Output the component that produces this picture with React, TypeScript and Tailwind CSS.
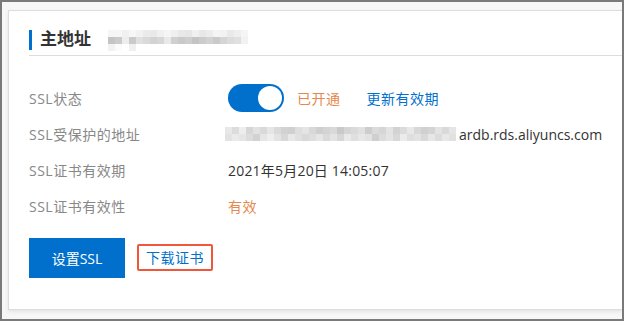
const FONT = '"Open Sans", "Noto Sans CJK SC", sans-serif';

// mosaic rows for the blurred text
const titleRows = [
  "fff,f6f6f6,f6f6f6,f0f0f0,f7f7f7,f2f2f2,ebebeb,e9e9e9,f0f0f0,f5f5f5,efefef,e8e8e8,e6e6e6,f0f0f0,e8e8e8,ececec,f4f4f4,f2f2f2,e9e9e9,eeeeee,f5f5f5",
  "fff,c4c4c4,cbcbcb,ededed,cacaca,e0e0e0,dadada,d3d3d3,d7d7d7,e9e9e9,d0d0d0,c9c9c9,cecece,c4c4c4,cccccc,d2d2d2,cacaca,d5d5d5,dcdcdc,e0e0e0,f2f2f2",
  "fff,f2f2f2,fbfbfb,fff,f0f0f0,fff,fff,fff,fff,fff,fff,fff,fff,fff,fff,fff,fff,fff,fff,fff,fff",
];

const addrRows = [
  "e8e8e8,dcdcdc,eeeeee,d6d6d6,e2e2e2,d9d9d9,e6e6e6,dadada,d2d2d2,d0d0d0,dedede,e4e4e4,d8d8d8,cfcfcf,d4d4d4,d9d9d9,c9c9c9,d5d5d5,dadada,e0e0e0,cdcdcd,dbdbdb,d6d6d6,e3e3e3,d2d2d2,dcdcdc,e8e8e8,d8d8d8,d0d0d0,d4d4d4,e3e3e3,d9d9d9,e5e5e5",
  "e2e2e2,eaeaea,e5e5e5,dcdcdc,d2d2d2,e6e6e6,eeeeee,e3e3e3,d8d8d8,e8e8e8,e0e0e0,d9d9d9,dedede,e6e6e6,dadada,e3e3e3,d7d7d7,e9e9e9,dfdfdf,e7e7e7,e2e2e2,cfcfcf,dcdcdc,e4e4e4,d8d8d8,ebebeb,dfdfdf,e3e3e3,d9d9d9,e6e6e6,dcdcdc,e8e8e8,e1e1e1",
];

function Mosaic({ rows, cell }: { rows: string[]; cell: number }) {
  return (
    <div className="flex flex-col">
      {rows.map((row, i) => (
        <div key={i} className="flex">
          {row.split(",").map((c, j) => (
            <div key={j} style={{ width: cell, height: cell, background: `#${c}` }} />
          ))}
        </div>
      ))}
    </div>
  );
}

function Toggle() {
  return (
    <div className="w-[56px] h-[28px] rounded-full bg-[#0070cc] flex items-center justify-end pr-[2px]">
      <div className="w-[24px] h-[24px] rounded-full bg-white" />
    </div>
  );
}

function Row({ label, children }: { label: string; children: React.ReactNode }) {
  return (
    <div className="flex items-center h-[36px]">
      <div className="w-[199px] text-[14px] tracking-[0.5px] text-[#888]">{label}</div>
      <div className="flex items-center text-[14px] text-[#333]">{children}</div>
    </div>
  );
}

export default function App() {
  return (
    <div
      className="w-[624px] h-[321px] border-2 border-[#7a7a7a] bg-[#f7f7f7] pl-[6px] pt-[8px] pb-[9px] overflow-hidden"
      style={{ fontFamily: FONT }}
    >
      <div className="h-full bg-white border border-[#dcdcdc] border-r-0 shadow-[0_2px_4px_rgba(0,0,0,0.08)] pl-[20px] pt-[19px]">
        {/* Title */}
        <div className="flex items-center h-[25px] border-b border-[#ddd] box-content">
          <div className="w-[3px] h-[20px] bg-[#0070cc] mb-[6px]" />
          <div className="ml-[8px] mb-[8px] text-[17px] font-bold text-[#333]">主地址</div>
          <div className="ml-[10px] mb-[4px]">
            <Mosaic rows={titleRows} cell={7} />
          </div>
        </div>

        <div className="pt-[24px]">
          <Row label="SSL状态">
            <Toggle />
            <span className="ml-[13px] tracking-[0.5px] text-[#e3894d]">已开通</span>
            <span className="ml-[26px] tracking-[0.5px] text-[#0070cc]">更新有效期</span>
          </Row>
          <Row label="SSL受保护的地址">
            <div className="-ml-[3px]">
              <Mosaic rows={addrRows} cell={7} />
            </div>
            <span className="ml-[3px]">ardb.rds.aliyuncs.com</span>
          </Row>
          <Row label="SSL证书有效期">
            <span className="tracking-[0.2px]">2021年5月20日 14:05:07</span>
          </Row>
          <Row label="SSL证书有效性">
            <span className="tracking-[0.5px] text-[#e3894d]">有效</span>
          </Row>
        </div>

        <div className="flex items-center mt-[14px]">
          <button
            type="button"
            className="w-[96px] h-[40px] bg-[#0070cc] text-white text-[14px]"
          >
            设置SSL
          </button>
          <div className="ml-[12px] mb-[2px] border-2 border-[#f0573a] rounded-[2px] px-[7px] h-[27px] flex items-center text-[14px] tracking-[0.5px] text-[#0070cc]">
            下载证书
          </div>
        </div>
      </div>
    </div>
  );
}
